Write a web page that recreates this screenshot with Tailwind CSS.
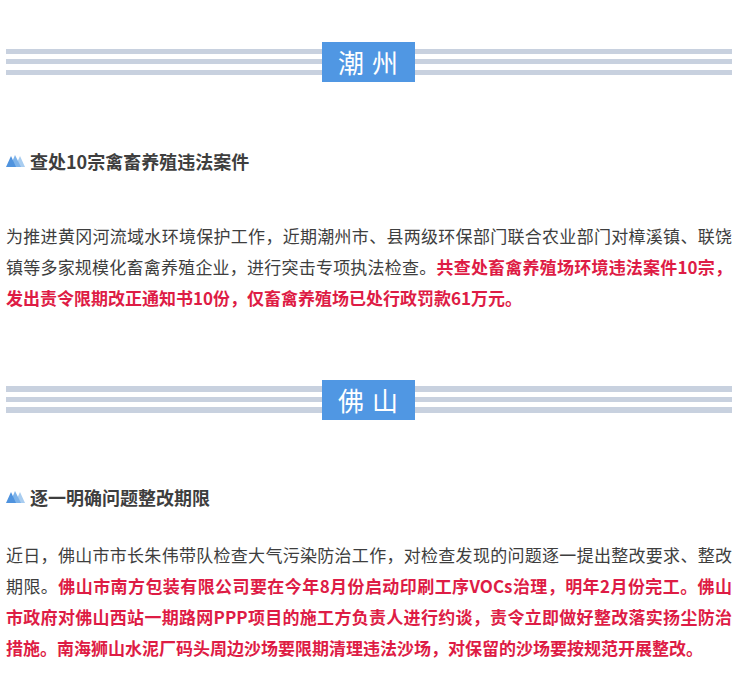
<!DOCTYPE html>
<html lang="zh-CN">
<head>
<meta charset="UTF-8">
<title>环保执法</title>
<script src="https://cdn.jsdelivr.net/npm/@tailwindcss/browser@4"></script>
</head>
<body class="bg-white font-['Noto_Sans_CJK_SC',sans-serif] text-[#3e3e3e] overflow-hidden">
<div class="w-[750px] h-[682px] pl-[6px] pr-[18px] pt-[42px]">

  <!-- 潮州 -->
  <div class="relative h-[40px] flex flex-col justify-center gap-[5px]">
    <div class="h-[5px] bg-[#c8d1df]"></div>
    <div class="h-[5px] bg-[#c8d1df]"></div>
    <div class="h-[5px] bg-[#c8d1df] mt-[1px]"></div>
    <div class="absolute left-[316px] top-0 w-[93px] h-[40px] bg-[#5097e3] text-white text-[26px] leading-[40px] text-center tracking-[1px]">潮 州</div>
  </div>
  <div class="mt-[67px] h-[24px] flex items-center gap-[5px]">
    <svg width="19" height="12" viewBox="0 0 19 12"><path d="M14 1L19 12H9Z" fill="#a9cdf0"/><path d="M9 0L15 12H4Z" fill="#7db3ea"/><path d="M5 1L10 12H0Z" fill="#4f93de"/></svg>
    <h2 class="text-[18px] leading-[24px] font-bold">查处10宗禽畜养殖违法案件</h2>
  </div>
  <p class="mt-[47px] text-[17px] leading-[31px] text-justify">为推进黄冈河流域水环境保护工作，近期潮州市、县两级环保部门联合农业部门对樟溪镇、联饶镇等多家规模化畜禽养殖企业，进行突击专项执法检查。<strong class="font-bold text-[#de1c45]">共查处畜禽养殖场环境违法案件10宗，发出责令限期改正通知书10份，仅畜禽养殖场已处行政罚款61万元。</strong></p>

  <!-- 佛山 -->
  <div class="relative h-[40px] mt-[67px] pt-[6px] flex flex-col gap-[5px]">
    <div class="h-[6px] bg-[#c8d1df]"></div>
    <div class="h-[5px] bg-[#c8d1df]"></div>
    <div class="h-[6px] bg-[#c8d1df]"></div>
    <div class="absolute left-[316px] top-0 w-[93px] h-[40px] bg-[#5097e3] text-white text-[26px] leading-[40px] text-center tracking-[1px]">佛 山</div>
  </div>
  <div class="mt-[65px] h-[24px] flex items-center gap-[5px]">
    <svg width="19" height="12" viewBox="0 0 19 12"><path d="M14 1L19 12H9Z" fill="#a9cdf0"/><path d="M9 0L15 12H4Z" fill="#7db3ea"/><path d="M5 1L10 12H0Z" fill="#4f93de"/></svg>
    <h2 class="text-[18px] leading-[24px] font-bold">逐一明确问题整改期限</h2>
  </div>
  <p class="mt-[30px] text-[17px] leading-[31px] text-justify">近日，佛山市市长朱伟带队检查大气污染防治工作，对检查发现的问题逐一提出整改要求、整改期限。<strong class="font-bold text-[#de1c45]">佛山市南方包装有限公司要在今年8月份启动印刷工序VOCs治理，明年2月份完工。佛山市政府对佛山西站一期路网PPP项目的施工方负责人进行约谈，责令立即做好整改落实扬尘防治措施。南海狮山水泥厂码头周边沙场要限期清理违法沙场，对保留的沙场要按规范开展整改。</strong></p>
</div>
</body>
</html>
